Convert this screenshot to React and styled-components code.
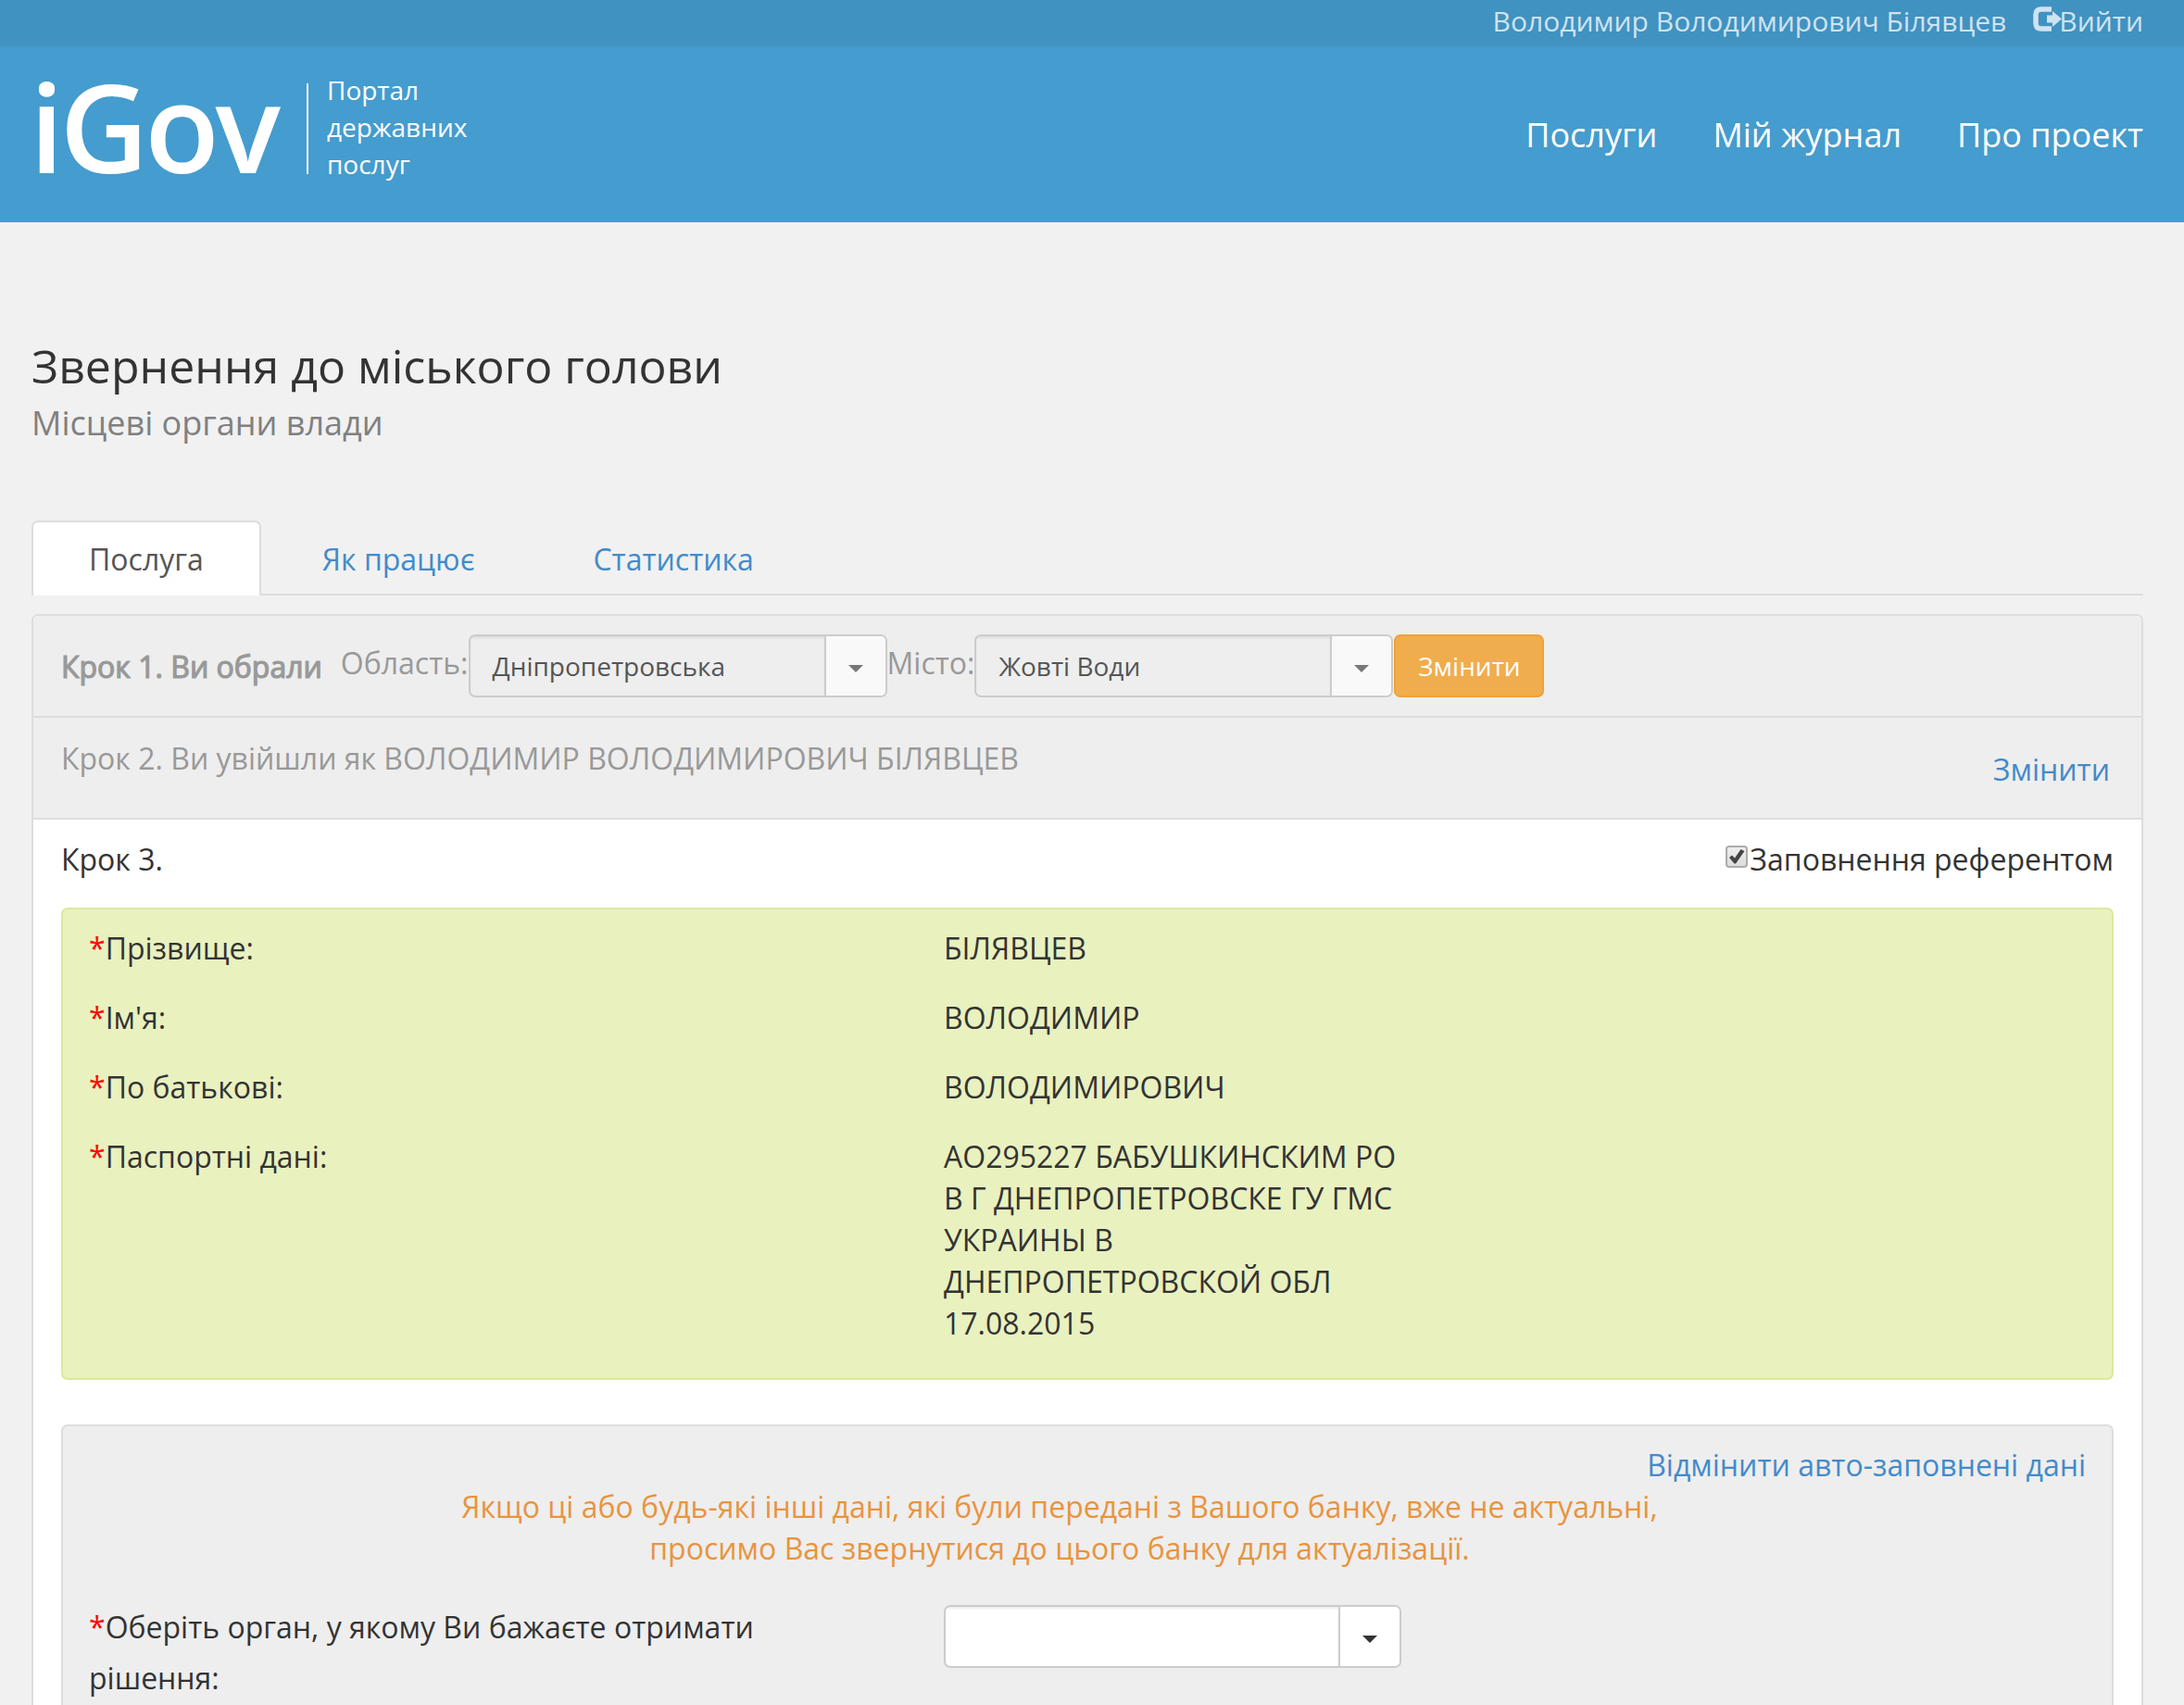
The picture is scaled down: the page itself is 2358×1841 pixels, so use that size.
import React from "react";
import styled, { createGlobalStyle } from "styled-components";

const GlobalStyle = createGlobalStyle`
  *, *::before, *::after { box-sizing: border-box; }
  body {
    margin: 0;
    background: #f1f1f1;
    color: #333;
    font-family: "Open Sans", "Noto Sans", sans-serif;
    font-size: 32px;
    line-height: 45px;
  }
  a { color: #428bca; text-decoration: none; }
`;

const Page = styled.div`
  height: 1841px;
  overflow: hidden;
`;

const UserBar = styled.div`
  display: flex;
  justify-content: flex-end;
  gap: 29px;
  height: 50px;
  padding: 3px 44px 0 0;
  background: #4092c1;
  color: #cfe3f0;
  font-size: 30px;
  line-height: 40px;
`;

const LogoutLink = styled.a`
  && { color: inherit; }
  display: flex;

  svg {
    margin: 4px -4px 0 0;
  }
`;

const Header = styled.header`
  display: flex;
  justify-content: space-between;
  height: 190px;
  padding: 0 44px 0 32px;
  background: #459cce;
  color: #fff;
`;

const Brand = styled.div`
  display: flex;
  align-items: flex-start;
`;

const Logo = styled.span`
  width: 299px;
  margin-top: 16px;
  font-size: 132px;
  font-weight: 600;
  letter-spacing: -4.2px;
  line-height: 140px;
  white-space: nowrap;
`;

const Slogan = styled.div`
  display: flex;
  margin-top: 27px;
  font-size: 28px;
  line-height: 40px;

  &::before {
    content: "";
    width: 2px;
    height: 98px;
    margin: 13px 20px 0 0;
    background: #fff;
  }
`;

const Nav = styled.nav`
  display: flex;
  gap: 60px;
  margin-top: 71px;
  font-size: 36px;
  line-height: 50px;

  a { color: #fff; }
`;

const Content = styled.main`
  padding: 128px 44px 0 34px;
`;

const Title = styled.h1`
  margin: 0;
  font-size: 50px;
  font-weight: 400;
  line-height: 55px;
`;

const Subtitle = styled.div`
  margin-top: 14px;
  color: #808080;
  font-size: 36px;
  line-height: 40px;
`;

const Tabs = styled.div`
  display: flex;
  gap: 4px;
  height: 81px;
  margin: 85px 0 20px;
  border-bottom: 2px solid #ddd;
`;

const Tab = styled.a`
  && { color: ${(p) => (p.$active ? "#555" : "#428bca")}; }
  height: 81px;
  padding: 17px 60px 0;
  border: 2px solid ${(p) => (p.$active ? "#ddd" : "transparent")};
  border-bottom: 0;
  border-radius: 7px 7px 0 0;
  background: ${(p) => (p.$active ? "#fff" : "transparent")};
`;

const Panel = styled.section`
  height: 1300px;
  border: 2px solid #ddd;
  border-radius: 7px;
  background: #fff;
`;

const Step = styled.div`
  display: flex;
  height: 110px;
  padding: ${(p) => (p.$first ? 20 : 21)}px 30px;
  border-bottom: 2px solid #ddd;
  border-radius: ${(p) => (p.$first ? "6px 6px 0 0" : "0")};
  background: #eee;
  color: #999;
`;

const StepTitle = styled.span`
  margin: 12px 20px 0 0;
  -webkit-text-stroke: 1.2px #999;
`;

const FieldLabel = styled.span`
  margin-top: 8px;
  white-space: nowrap;
`;

const ChangeLink = styled.a`
  margin: 12px 4px 0 auto;
`;

const Combo = styled.div`
  display: flex;
  width: ${(p) => p.$width}px;
  height: 68px;
  border: 2px solid #ccc;
  border-radius: 7px;
  background: ${(p) => (p.$disabled ? "#eee" : "#fff")};
  overflow: hidden;
`;

const ComboValue = styled.div`
  flex: 1;
  padding: 12px 24px;
  box-shadow: inset 0 2px 2px rgba(0, 0, 0, 0.075);
  color: #555;
  font-size: 28px;
  line-height: 40px;
`;

const ComboToggle = styled.div`
  display: flex;
  align-items: center;
  justify-content: center;
  width: 66px;
  padding-top: 6px;
  border-left: 2px solid #ccc;
  background: ${(p) => (p.$disabled ? "#f9f9f9" : "#fff")};
  color: ${(p) => (p.$disabled ? "#777" : "#333")};
`;

const ChangeButton = styled.button`
  width: 162px;
  height: 68px;
  margin-left: 1px;
  padding: 0;
  border: 2px solid #eea236;
  border-radius: 7px;
  background: #f0ad4e;
  color: #fff;
  font: 28px / 40px "Open Sans", "Noto Sans", sans-serif;
`;

const StepBody = styled.div`
  padding: 20px 30px 0;
`;

const StepHead = styled.div`
  display: flex;
  justify-content: space-between;
`;

const CheckLabel = styled.label`
  display: flex;

  svg { margin: 8px 2px 0 0; }
`;

const Box = styled.div`
  border: 2px solid ${(p) => (p.$green ? "#dbe8a0" : "#ddd")};
  border-radius: 7px;
  background: ${(p) => (p.$green ? "#e9f1bf" : "#eee")};
`;

const PersonBox = styled(Box)`
  display: grid;
  grid-template-columns: 923px 500px;
  row-gap: 30px;
  align-content: start;
  height: 510px;
  margin: 30px 0 48px;
  padding: 19px 28px;
`;

const RequestBox = styled(Box)`
  height: 600px;
  padding: 19px 28px;
`;

const CancelRow = styled.div`
  text-align: right;
`;

const Notice = styled.p`
  width: 2096px;
  margin: 0;
  color: #e8943f;
  text-align: center;
`;

const RequestRow = styled.div`
  display: grid;
  grid-template-columns: 923px 494px;
  margin-top: 35px;
  line-height: 55px;
`;

const ComboSlot = styled.div`
  padding-top: 4px;
`;

const Star = styled.span`
  color: #f00;
`;

const Caret = () => (
  <svg width="16" height="8" viewBox="0 0 16 8" fill="currentColor">
    <path d="M0 0H16L8 8Z" />
  </svg>
);

const LogoutIcon = () => (
  <svg width="32" height="27" viewBox="0 0 32 27">
    <path
      d="M20 3H9Q3 3 3 9V18Q3 24 9 24H20"
      fill="none"
      stroke="currentColor"
      strokeWidth="5.5"
    />
    <path d="M15 9.500H21V5L31 13.500L21 22V17.500H15Z" fill="currentColor" />
  </svg>
);

const CheckIcon = () => (
  <svg width="24" height="25" viewBox="0 0 24 25">
    <defs>
      <linearGradient id="checkFace" x1="0" y1="0" x2="0" y2="1">
        <stop offset="0" stopColor="#eee" />
        <stop offset="1" stopColor="#dcdcdc" />
      </linearGradient>
    </defs>
    <rect x="1" y="1" width="22" height="22" rx="3" fill="url(#checkFace)" stroke="#acacac" strokeWidth="2" />
    <path d="M4 13L7 10.500L10 13.500L16.500 4L20.500 6L11 19.500H9.500Z" fill="#444" />
  </svg>
);

const Select = ({ value, disabled, width }) => (
  <Combo $disabled={disabled} $width={width}>
    <ComboValue>{value}</ComboValue>
    <ComboToggle $disabled={disabled}>
      <Caret />
    </ComboToggle>
  </Combo>
);

const person = [
  { label: "Прізвище:", lines: ["БІЛЯВЦЕВ"] },
  { label: "Ім'я:", lines: ["ВОЛОДИМИР"] },
  { label: "По батькові:", lines: ["ВОЛОДИМИРОВИЧ"] },
  {
    label: "Паспортні дані:",
    lines: [
      "АО295227 БАБУШКИНСКИМ РО",
      "В Г ДНЕПРОПЕТРОВСКЕ ГУ ГМС",
      "УКРАИНЫ В",
      "ДНЕПРОПЕТРОВСКОЙ ОБЛ",
      "17.08.2015",
    ],
  },
];

export default function App() {
  return (
    <Page>
      <GlobalStyle />
      <UserBar>
        <span>Володимир Володимирович Білявцев</span>
        <LogoutLink>
          <LogoutIcon />
          Вийти
        </LogoutLink>
      </UserBar>
      <Header>
        <Brand>
          <Logo>iGov</Logo>
          <Slogan>
            <div>
              Портал
              <br />
              державних
              <br />
              послуг
            </div>
          </Slogan>
        </Brand>
        <Nav>
          <a>Послуги</a>
          <a>Мій журнал</a>
          <a>Про проект</a>
        </Nav>
      </Header>
      <Content>
        <Title>Звернення до міського голови</Title>
        <Subtitle>Місцеві органи влади</Subtitle>
        <Tabs>
          <Tab $active>Послуга</Tab>
          <Tab>Як працює</Tab>
          <Tab>Статистика</Tab>
        </Tabs>
        <Panel>
          <Step $first>
            <StepTitle>Крок 1. Ви обрали</StepTitle>
            <FieldLabel>Область:</FieldLabel>
            <Select value="Дніпропетровська" disabled width={452} />
            <FieldLabel>Місто:</FieldLabel>
            <Select value="Жовті Води" disabled width={452} />
            <ChangeButton>Змінити</ChangeButton>
          </Step>
          <Step>
            <span>Крок 2. Ви увійшли як ВОЛОДИМИР ВОЛОДИМИРОВИЧ БІЛЯВЦЕВ</span>
            <ChangeLink>Змінити</ChangeLink>
          </Step>
          <StepBody>
            <StepHead>
              <span>Крок 3.</span>
              <CheckLabel>
                <CheckIcon />
                Заповнення референтом
              </CheckLabel>
            </StepHead>
            <PersonBox $green>
              {person.map((row) => (
                <React.Fragment key={row.label}>
                  <div>
                    <Star>*</Star>
                    {row.label}
                  </div>
                  <div>
                    {row.lines.map((line) => (
                      <div key={line}>{line}</div>
                    ))}
                  </div>
                </React.Fragment>
              ))}
            </PersonBox>
            <RequestBox>
              <CancelRow>
                <a>Відмінити авто-заповнені дані</a>
              </CancelRow>
              <Notice>
                Якщо ці або будь-які інші дані, які були передані з Вашого банку, вже не актуальні,
                <br />
                просимо Вас звернутися до цього банку для актуалізації.
              </Notice>
              <RequestRow>
                <div>
                  <Star>*</Star>Оберіть орган, у якому Ви бажаєте отримати
                  <br />
                  рішення:
                </div>
                <ComboSlot>
                  <Select value="" width={494} />
                </ComboSlot>
              </RequestRow>
            </RequestBox>
          </StepBody>
        </Panel>
      </Content>
    </Page>
  );
}
